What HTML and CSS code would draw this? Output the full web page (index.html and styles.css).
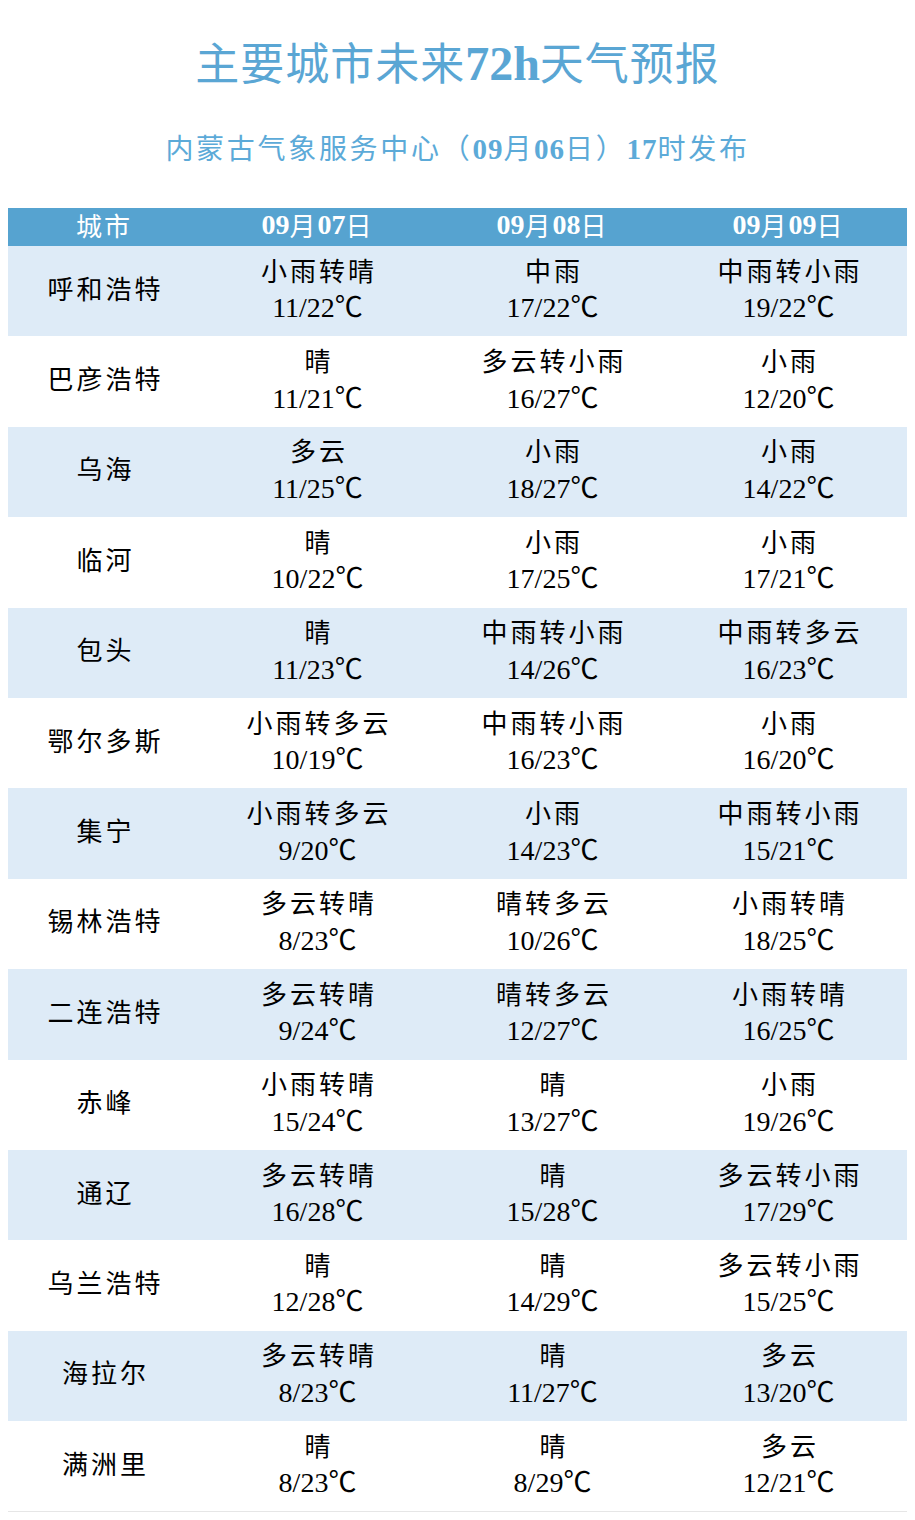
FILE: index.html
```html
<!DOCTYPE html>
<html lang="zh-CN">
<head>
<meta charset="utf-8">
<title>主要城市未来72h天气预报</title>
<link rel="stylesheet" href="styles.css">
</head>
<body>
<div class="page">
  <h1 class="title">主要城市未来<span class="num">72h</span>天气预报</h1>
  <p class="subtitle">内蒙古气象服务中心（<span class="num">09</span>月<span class="num">06</span>日）<span class="num">17</span>时发布</p>
  <div class="table">
    <div class="row head">
      <div class="cell">城市</div>
      <div class="cell"><span class="num">09</span>月<span class="num">07</span>日</div>
      <div class="cell"><span class="num">09</span>月<span class="num">08</span>日</div>
      <div class="cell"><span class="num">09</span>月<span class="num">09</span>日</div>
    </div>
    <div class="row shade">
      <div class="cell city">呼和浩特</div>
      <div class="cell"><span class="wx">小雨转晴</span><span class="tp">11/22℃</span></div>
      <div class="cell"><span class="wx">中雨</span><span class="tp">17/22℃</span></div>
      <div class="cell"><span class="wx">中雨转小雨</span><span class="tp">19/22℃</span></div>
    </div>
    <div class="row">
      <div class="cell city">巴彦浩特</div>
      <div class="cell"><span class="wx">晴</span><span class="tp">11/21℃</span></div>
      <div class="cell"><span class="wx">多云转小雨</span><span class="tp">16/27℃</span></div>
      <div class="cell"><span class="wx">小雨</span><span class="tp">12/20℃</span></div>
    </div>
    <div class="row shade">
      <div class="cell city">乌海</div>
      <div class="cell"><span class="wx">多云</span><span class="tp">11/25℃</span></div>
      <div class="cell"><span class="wx">小雨</span><span class="tp">18/27℃</span></div>
      <div class="cell"><span class="wx">小雨</span><span class="tp">14/22℃</span></div>
    </div>
    <div class="row">
      <div class="cell city">临河</div>
      <div class="cell"><span class="wx">晴</span><span class="tp">10/22℃</span></div>
      <div class="cell"><span class="wx">小雨</span><span class="tp">17/25℃</span></div>
      <div class="cell"><span class="wx">小雨</span><span class="tp">17/21℃</span></div>
    </div>
    <div class="row shade">
      <div class="cell city">包头</div>
      <div class="cell"><span class="wx">晴</span><span class="tp">11/23℃</span></div>
      <div class="cell"><span class="wx">中雨转小雨</span><span class="tp">14/26℃</span></div>
      <div class="cell"><span class="wx">中雨转多云</span><span class="tp">16/23℃</span></div>
    </div>
    <div class="row">
      <div class="cell city">鄂尔多斯</div>
      <div class="cell"><span class="wx">小雨转多云</span><span class="tp">10/19℃</span></div>
      <div class="cell"><span class="wx">中雨转小雨</span><span class="tp">16/23℃</span></div>
      <div class="cell"><span class="wx">小雨</span><span class="tp">16/20℃</span></div>
    </div>
    <div class="row shade">
      <div class="cell city">集宁</div>
      <div class="cell"><span class="wx">小雨转多云</span><span class="tp">9/20℃</span></div>
      <div class="cell"><span class="wx">小雨</span><span class="tp">14/23℃</span></div>
      <div class="cell"><span class="wx">中雨转小雨</span><span class="tp">15/21℃</span></div>
    </div>
    <div class="row">
      <div class="cell city">锡林浩特</div>
      <div class="cell"><span class="wx">多云转晴</span><span class="tp">8/23℃</span></div>
      <div class="cell"><span class="wx">晴转多云</span><span class="tp">10/26℃</span></div>
      <div class="cell"><span class="wx">小雨转晴</span><span class="tp">18/25℃</span></div>
    </div>
    <div class="row shade">
      <div class="cell city">二连浩特</div>
      <div class="cell"><span class="wx">多云转晴</span><span class="tp">9/24℃</span></div>
      <div class="cell"><span class="wx">晴转多云</span><span class="tp">12/27℃</span></div>
      <div class="cell"><span class="wx">小雨转晴</span><span class="tp">16/25℃</span></div>
    </div>
    <div class="row">
      <div class="cell city">赤峰</div>
      <div class="cell"><span class="wx">小雨转晴</span><span class="tp">15/24℃</span></div>
      <div class="cell"><span class="wx">晴</span><span class="tp">13/27℃</span></div>
      <div class="cell"><span class="wx">小雨</span><span class="tp">19/26℃</span></div>
    </div>
    <div class="row shade">
      <div class="cell city">通辽</div>
      <div class="cell"><span class="wx">多云转晴</span><span class="tp">16/28℃</span></div>
      <div class="cell"><span class="wx">晴</span><span class="tp">15/28℃</span></div>
      <div class="cell"><span class="wx">多云转小雨</span><span class="tp">17/29℃</span></div>
    </div>
    <div class="row">
      <div class="cell city">乌兰浩特</div>
      <div class="cell"><span class="wx">晴</span><span class="tp">12/28℃</span></div>
      <div class="cell"><span class="wx">晴</span><span class="tp">14/29℃</span></div>
      <div class="cell"><span class="wx">多云转小雨</span><span class="tp">15/25℃</span></div>
    </div>
    <div class="row shade">
      <div class="cell city">海拉尔</div>
      <div class="cell"><span class="wx">多云转晴</span><span class="tp">8/23℃</span></div>
      <div class="cell"><span class="wx">晴</span><span class="tp">11/27℃</span></div>
      <div class="cell"><span class="wx">多云</span><span class="tp">13/20℃</span></div>
    </div>
    <div class="row last">
      <div class="cell city">满洲里</div>
      <div class="cell"><span class="wx">晴</span><span class="tp">8/23℃</span></div>
      <div class="cell"><span class="wx">晴</span><span class="tp">8/29℃</span></div>
      <div class="cell"><span class="wx">多云</span><span class="tp">12/21℃</span></div>
    </div>
  </div>
</div>
</body>
</html>
```

FILE: styles.css
```css
html, body {
  margin: 0;
  padding: 0;
  background: #ffffff;
}

.page {
  padding: 39px 8px 0 8px;
  font-family: "Liberation Serif", "Noto Sans CJK SC", serif;
  color: #000000;
}

.num {
  font-family: "Liberation Serif", serif;
  font-weight: bold;
  letter-spacing: 0;
}

.title {
  margin: 0;
  text-align: center;
  font-family: "Noto Sans CJK SC", sans-serif;
  font-weight: normal;
  font-size: 44px;
  line-height: 44px;
  letter-spacing: 1px;
  color: #5aa6d4;
}

.title .num {
  font-size: 48px;
}

.subtitle {
  margin: 46px 0 0 0;
  text-align: center;
  font-family: "Noto Sans CJK SC", sans-serif;
  font-size: 28px;
  line-height: 30px;
  letter-spacing: 2.7px;
  color: #5caad8;
}

.subtitle .num {
  font-size: 29px;
  letter-spacing: 1px;
}

.table {
  margin-top: 44px;
  display: flex;
  flex-direction: column;
  width: 899px;
}

.row {
  display: grid;
  grid-template-columns: 192px 235px 235px 237px;
  height: 90.4px;
}

.row.shade {
  background: #deebf7;
}

.row.last {
  border-bottom: 1px solid #e6e6e6;
}

.row.head {
  height: 38px;
  background: #56a3d0;
  color: #ffffff;
}

.cell {
  display: flex;
  flex-direction: column;
  align-items: center;
  justify-content: center;
  text-align: center;
  padding-bottom: 5.5px;
}

.head .cell {
  flex-direction: row;
  padding-bottom: 4px;
  font-family: "Noto Sans CJK SC", sans-serif;
  font-size: 26px;
  line-height: 34px;
  letter-spacing: 2px;
}

.head .num {
  font-size: 28px;
}

.city {
  font-family: "Noto Sans CJK SC", sans-serif;
  font-size: 26px;
  letter-spacing: 3px;
  padding-left: 3px;
  padding-bottom: 8px;
}

.wx {
  display: block;
  font-family: "Noto Sans CJK SC", sans-serif;
  font-size: 26px;
  line-height: 35px;
  letter-spacing: 3px;
  padding-left: 3px;
  margin-bottom: 3.5px;
}

.tp {
  display: block;
  font-family: "Liberation Serif", "Noto Sans CJK SC", serif;
  font-size: 28px;
  line-height: 35px;
}
```
